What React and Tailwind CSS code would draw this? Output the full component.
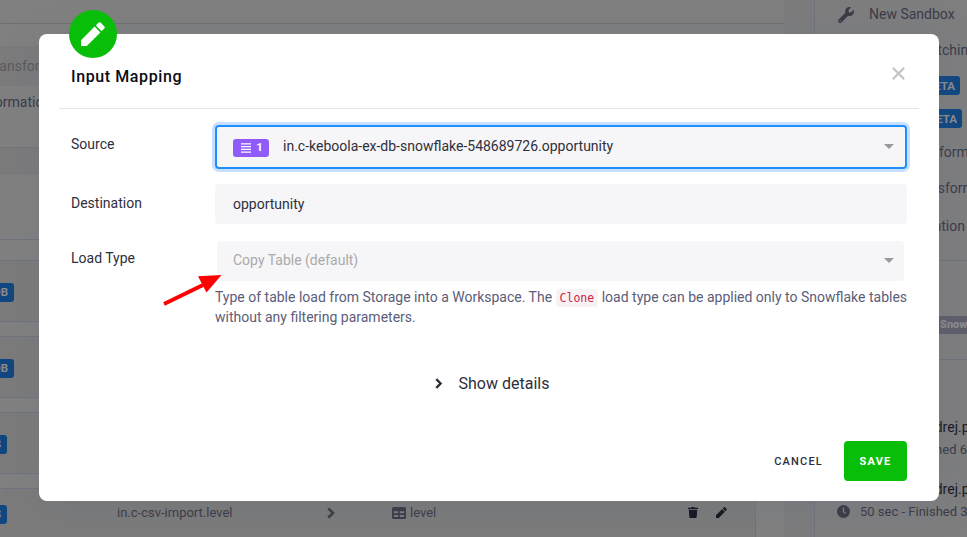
import React from 'react';

function Pencil({ className }) {
  return (
    <svg viewBox="0 0 24 24" className={className} fill="currentColor">
      <path d="M0 24V18.2L13.6 4.6L19.4 10.4L5.8 24ZM14.8 3.4L17.4 .8Q18.6-.4 19.8.8L23.2 4.2Q24.4 5.4 23.2 6.6L20.6 9.2Z" />
    </svg>
  );
}

function Chevron({ className }) {
  return (
    <svg viewBox="0 0 8 12" className={className} fill="none" stroke="currentColor" strokeWidth="2.6">
      <path d="M1.3 1.3L6 6L1.3 10.7" />
    </svg>
  );
}

function Caret() {
  return <span className="mb-[2px] size-0 border-x-5 border-t-5 border-x-transparent border-t-[#999]" />;
}

function Tag({ children, className }) {
  return (
    <span className={`flex h-[19px] w-14 shrink-0 items-center justify-end rounded-[3px] bg-[#104780] text-[11.5px] font-bold text-[#8c8c8c] ${className}`}>
      {children}
    </span>
  );
}

function MappingRow({ label, className, children }) {
  return (
    <div className={`flex h-[62px] shrink-0 items-center border-y border-[#72727e] bg-[#7b7b7b] pt-[2px] ${className}`}>
      <Tag className={label === 'DB' ? '-ml-[42px] pr-[6px]' : '-ml-[49px] pr-[6px]'}>{label}</Tag>
      {children}
    </div>
  );
}

function Page() {
  return (
    <div className="flex h-full w-full overflow-hidden bg-[#7c7c7d] text-[14px] leading-5 text-[#3b3b47]">
      <main className="flex h-full w-[784px] shrink-0 flex-col bg-[#808080]">
        <div className="h-6 shrink-0 border-b border-[#6f6f73]" />
        <div className="mt-[22px] flex h-10 shrink-0 items-center bg-[#7b7b7c] text-[#5c5c5c]">
          <span className="-ml-[13px]">Transformation</span>
        </div>
        <div className="h-[62px] shrink-0 border-b border-[#757579] pt-[6px]">
          <span className="-ml-[10px]">formations</span>
        </div>
        <div className="h-[27px] shrink-0 bg-[#7b7b7c]" />
        <div className="h-[65px] shrink-0 border-b border-[#72727e]" />
        <div className="flex w-[756px] flex-col gap-[14px] pt-5">
          <MappingRow label="DB" />
          <MappingRow label="DB" />
          <MappingRow label="S" />
          <div className="flex h-[49px] items-center border-t border-r border-[#72727e] bg-[#7b7b7b] text-[13px]">
            <Tag className="mt-[2px] -ml-[49px] pr-[6px]">S</Tag>
            <span className="ml-[110px] w-[210px]">in.c-csv-import.level</span>
            <Chevron className="h-3 w-2" />
            <svg viewBox="0 0 14 12" className="ml-[57px] h-3 w-[14px]">
              <rect width="14" height="12" rx="1.5" fill="currentColor" />
              <path d="M1.8 4.2H6.2V6.3H1.8ZM7.8 4.2H12.2V6.3H7.8ZM1.8 7.9H6.2V10H1.8ZM7.8 7.9H12.2V10H7.8Z" fill="#7b7b7b" />
            </svg>
            <span className="ml-1 w-[278px]">level</span>
            <svg viewBox="0 0 10 11" className="mb-px h-[11px] w-[10px] text-[#151521]" fill="currentColor">
              <path d="M0 .7H3L3.6 0H6.4L7 .7H10V2H0ZM.8 2.8H9.2L8.7 10Q8.6 11 7.6 11H2.4Q1.4 11 1.3 10Z" />
            </svg>
            <Pencil className="mb-px ml-[18px] size-[11px] text-[#151521]" />
          </div>
        </div>
      </main>
      <aside className="ml-[30px] flex h-full w-[153px] shrink-0 flex-col border-l border-[#72727e] bg-[#7e7e7f] whitespace-nowrap">
        <div className="flex h-7 shrink-0 items-center pl-[23px]">
          <svg viewBox="0 0 512 512" className="mt-px size-4 shrink-0" fill="currentColor">
            <path d="M507.700 109.100c-2.200-9-13.500-12.100-20.100-5.500l-74.400 74.400-67.900-11.300L334 98.900l74.400-74.400c6.600-6.600 3.400-17.900-5.700-20.200-47.400-11.700-99.600.9-136.600 37.900-39.600 39.600-50.500 97.100-34.100 147.200L18.700 402.800c-25 25-25 65.500 0 90.500s65.500 25 90.500 0l213.200-213.200c50.100 16.700 107.500 5.700 147.400-34.200 37.100-37.100 49.700-89.300 37.900-136.800zM64 472c-13.300 0-24-10.700-24-24s10.700-24 24-24 24 10.700 24 24-10.700 24-24 24z" />
          </svg>
          <span className="ml-[15px]">New Sandbox</span>
        </div>
        <span className="mt-3 -mr-[9px] self-end">Data Matching</span>
        <Tag className="mt-4 ml-[89px] pr-[5px]">BETA</Tag>
        <Tag className="mt-[14px] ml-[91px] pr-[5px]">BETA</Tag>
        <span className="mt-[14px] ml-[89px]">Transformation</span>
        <span className="mt-4 ml-[95px]">Transformation</span>
        <span className="mt-[18px] mr-[2px] self-end">Transformation</span>
        <div className="mt-6 h-[100px] shrink-0 border-y border-[#72727e] pt-[55px]">
          <div className="h-[18px] bg-[#5e5e6b] pl-[125px] text-[11px] leading-[18px] font-black text-[#8b8b8d]">Snowflake</div>
        </div>
        <div className="mt-[57px] pl-[104px] text-[#181823]">ondrej.popelka</div>
        <div className="mt-[3px] self-end text-[13px] leading-5">35 sec - Finished 6</div>
        <div className="mt-[19px] pl-[104px] text-[#181823]">ondrej.popelka</div>
        <div className="mt-[3px] flex items-center pl-[22px] text-[13px] leading-5">
          <svg viewBox="0 0 13 13" className="mb-px size-[13px] shrink-0">
            <circle cx="6.500" cy="6.500" r="6.500" fill="currentColor" />
            <path d="M6.500 2.500V6.800L8.700 8.500" fill="none" stroke="#7e7e7f" strokeWidth="1.300" />
          </svg>
          <span className="ml-[10px]">50 sec - Finished 3</span>
        </div>
      </aside>
    </div>
  );
}

function Modal() {
  return (
    <section className="absolute top-[34px] left-[39px] flex h-[467px] w-[900px] flex-col rounded-lg bg-white text-[14px] leading-5 text-[#2f2f3b] shadow-[0_4px_38px_#53637830]">
      <div className="absolute -top-6 left-[30px] flex size-12 items-center justify-center rounded-full bg-[#09be09] text-white">
        <Pencil className="size-6" />
      </div>
      <header className="mx-5 flex h-[75px] shrink-0 items-center justify-between border-b border-[#e5e5e5] pt-[10px] pr-[14px] pl-3">
        <h1 className="mt-[2px] text-[16px] font-medium tracking-[0.6px] text-[#0c0c14]">Input Mapping</h1>
        <svg viewBox="0 0 13 13" className="mb-[6px] size-[13px]" fill="none" stroke="#c4c4c4" strokeWidth="2.200">
          <path d="M.8 .8L12.200 12.200M12.200 .8L.8 12.200" />
        </svg>
      </header>
      <div className="mt-4 flex h-11 shrink-0 pr-8 pl-8">
        <label className="w-36 pt-[9px]">Source</label>
        <div className="flex flex-1 items-center rounded-[4px] border-2 border-[#1f8fff] bg-[#f6f6f8] pr-[11px] pl-4 ring-3 ring-[#c7e0ff]">
          <span className="mt-[2px] flex h-[18px] w-9 items-center justify-center gap-[5px] rounded-[3px] bg-[#915bfb] pl-[2px] text-[11.5px] font-bold text-white">
            <svg viewBox="0 0 10 10" className="mb-px size-[10px]" stroke="currentColor" strokeWidth="1.200">
              <path d="M0 .8H10M0 3.600H10M0 6.400H10M0 9.200H10" />
            </svg>
            <span className="-mt-[2px]">1</span>
          </span>
          <span className="ml-[14px] flex-1 -translate-y-px">in.c-keboola-ex-db-snowflake-548689726.opportunity</span>
          <Caret />
        </div>
      </div>
      <div className="mt-[15px] flex h-10 shrink-0 px-8">
        <label className="w-36 pt-[9px]">Destination</label>
        <div className="flex flex-1 items-center rounded-[4px] bg-[#f6f6f8] pl-[18px]">opportunity</div>
      </div>
      <div className="mt-[17px] flex h-10 shrink-0 px-8">
        <label className="w-36 pt-[7px]">Load Type</label>
        <div className="mr-[3px] ml-[2px] flex flex-1 items-center justify-between rounded-[4px] bg-[#f6f6f8] pr-[10px] pl-4 text-[#aaa]">
          <span className="-translate-y-px">Copy Table (default)</span>
          <Caret />
        </div>
      </div>
      <p className="mt-[6px] ml-[176px] w-[700px] text-[#5b5d7a]">
        Type of table load from Storage into a Workspace. The{' '}
        <code className="rounded-[4px] bg-[#f9f2f4] px-1 py-[2px] font-['DejaVu_Sans_Mono',monospace] text-[11.5px] leading-4 text-[#c7254e]">Clone</code>{' '}
        load type can be applied only to Snowflake tables<br />
        without any filtering parameters.
      </p>
      <div className="mt-[47px] flex items-center pl-[396px] text-[16px]">
        <Chevron className="mb-px h-[11px] w-[7.5px]" />
        <span className="ml-[16px]">Show details</span>
      </div>
      <footer className="mt-auto mb-5 flex items-center justify-end gap-[21px] pr-8 text-[11px] tracking-[1.200px]">
        <button className="mt-px font-medium">CANCEL</button>
        <button className="h-10 w-[63px] rounded-[4px] bg-[#09be09] pt-px font-bold tracking-[1.200px] text-white">SAVE</button>
      </footer>
    </section>
  );
}

export default function App() {
  return (
    <div className="relative h-[537px] w-[967px] overflow-hidden font-[Roboto,sans-serif]">
      <Page />
      <Modal />
      <svg viewBox="0 0 60 34" className="absolute top-[273px] left-[162px] h-[34px] w-[60px]">
        <path d="M2 31L41 12" stroke="#f00" strokeWidth="4" />
        <path d="M59.500 2L36 3.300L44.500 19.600Z" fill="#f00" />
      </svg>
    </div>
  );
}
